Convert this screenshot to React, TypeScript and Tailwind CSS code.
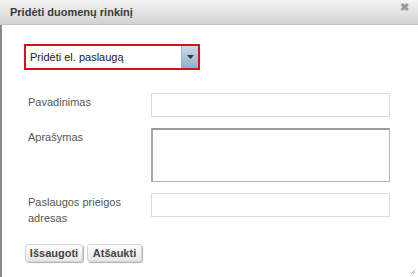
import React from "react";

export default function App() {
  return (
    <div className="w-[418px] h-[277px] bg-white overflow-hidden flex flex-col" style={{ fontFamily: '"Liberation Sans", Arial, sans-serif' }}>
      <div className="h-[25px] shrink-0 flex items-center justify-between pl-[10px] pr-[9px] bg-gradient-to-b from-[#f4f4f4] to-[#d2d2d2] border-b border-[#c4c4c4]">
        <span className="text-[11px] font-bold text-[#3a3a3a]">Pridėti duomenų rinkinį</span>
        <span className="text-[11px] font-bold text-[#9a9a9a] leading-none -mt-[10px]">✖</span>
      </div>
      <div className="relative flex-1 border-l-2 border-[#8a8a8a] pl-[22px] pt-[19px]">
        <div className="w-[176px] h-[26px] border-2 border-[#d8121c] bg-white flex items-stretch">
          <div className="flex-1 flex items-center pl-[4px] text-[11px] text-[#222]">Pridėti el. paslaugą</div>
          <div className="w-[17px] bg-gradient-to-b from-[#c9dcea] to-[#8fb2ca] border-l border-[#9bb5c8] flex items-center justify-center">
            <svg width="7" height="4" viewBox="0 0 7 4"><path d="M0 0h7L3.5 4z" fill="#333" /></svg>
          </div>
        </div>
        <div className="mt-[23px] pl-[4px] grid grid-cols-[123px_239px] gap-y-[11px] text-[11px] text-[#555]">
          <div className="pt-[1px] leading-[16px]">Pavadinimas</div>
          <div className="h-[24px] border border-[#dcdcdc] bg-white" />
          <div className="pt-[1px] leading-[16px]">Aprašymas</div>
          <div className="h-[54px] border border-[#b4b4b4] border-t-2 border-t-[#9a9a9a] border-l-2 border-l-[#a8a8a8] bg-white" />
          <div className="pt-[1px] leading-[16px]">Paslaugos prieigos<br />adresas</div>
          <div className="h-[24px] border border-[#dcdcdc] bg-white" />
        </div>
        <div className="mt-[18px] pl-[1px] flex gap-[4px]">
          <button className="w-[58px] h-[18px] rounded-[3px] bg-gradient-to-b from-[#ffffff] to-[#e6e6e6] border border-[#d4d4d4] shadow-[1px_1px_1px_#b0b0b0] text-[11px] font-bold text-[#444]">Išsaugoti</button>
          <button className="w-[55px] h-[18px] rounded-[3px] bg-gradient-to-b from-[#ffffff] to-[#e6e6e6] border border-[#d4d4d4] shadow-[1px_1px_1px_#b0b0b0] text-[11px] font-bold text-[#444]">Atšaukti</button>
        </div>
        <svg className="absolute right-[2px] bottom-[2px]" width="6" height="6" viewBox="0 0 6 6"><path d="M5 1L1 5M5 3L3 5" stroke="#aaa" strokeWidth="1" /></svg>
      </div>
    </div>
  );
}
